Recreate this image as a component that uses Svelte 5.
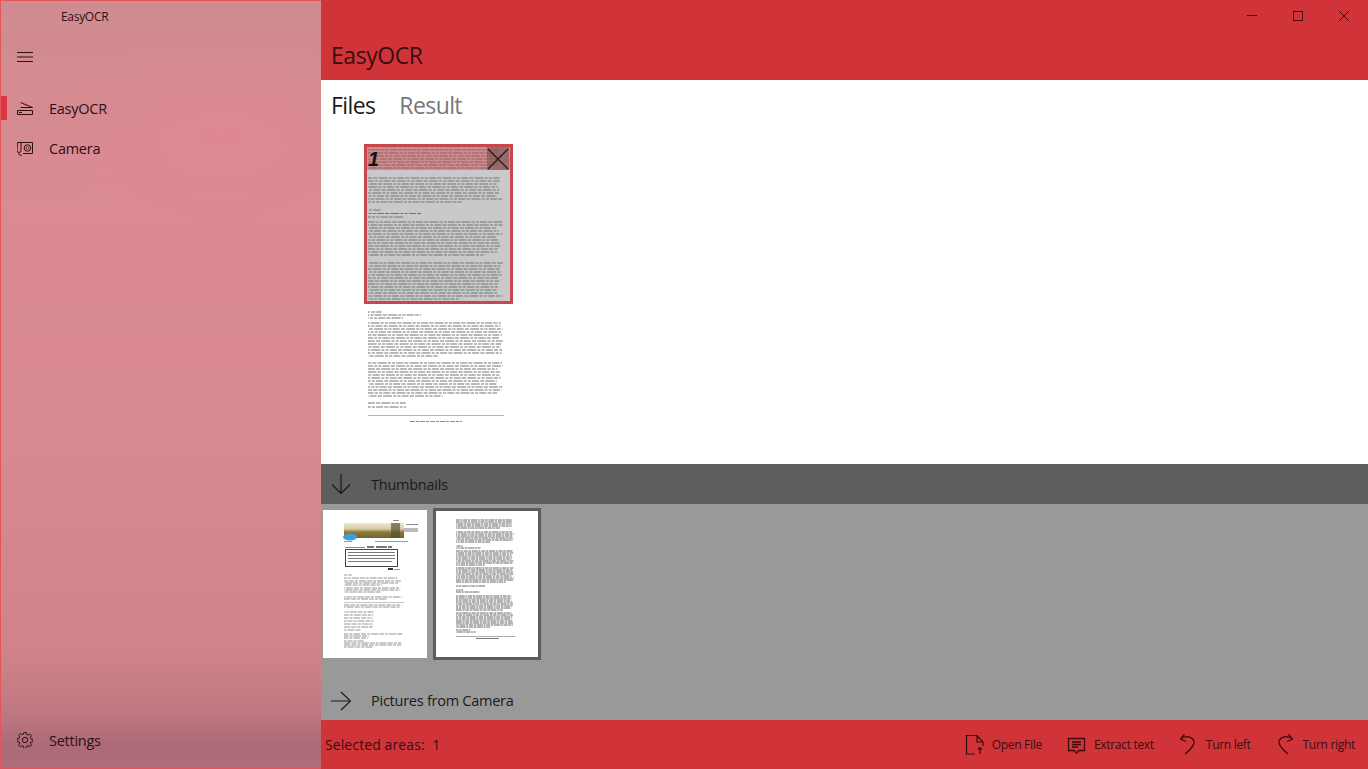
<script>
	// pseudo random line lengths, so the greeked pages don't look too regular
	function lineWidths(seed, count, max) {
		const out = []
		let s = seed
		for (let i = 0; i < count; i++) {
			s = (s * 9301 + 49297) % 233280
			const w = i === count - 1 && count > 2 ? max * (0.4 + (s / 233280) * 0.5) : max * (0.95 + (s / 233280) * 0.05)
			out.push(w)
		}
		return out
	}

	function block(seed, y, count, x, max, step) {
		return lineWidths(seed, count, max).map((w, i) => ({
			x,
			y: y + i * step,
			w,
			// shift the word gaps per line so they don't stack up in columns
			o: ((seed + i) * 13.7) % 31,
		}))
	}

	const mainBlocks = [
		...block(3, 6, 7, 4, 135, 3),
		...block(7, 34, 9, 4, 135, 3),
		...block(11, 66, 1, 4, 14, 3),
		...block(13, 69.500, 1, 4, 55, 3),
		...block(15, 73, 1, 4, 36, 3),
		...block(17, 78, 12, 4, 135, 3),
		...block(19, 119, 13, 4, 135, 3),
		...block(23, 168, 1, 4, 14, 3),
		...block(29, 171, 1, 4, 55, 3),
		...block(31, 174, 1, 4, 36, 3),
		...block(37, 179, 12, 4, 135, 3),
		...block(41, 219, 12, 4, 135, 3),
		...block(43, 259, 1, 4, 38, 3),
		...block(47, 263, 1, 4, 40, 3),
	]

	const sideBlocks = [
		...block(2, 9, 5, 20, 58, 2),
		...block(5, 21, 6, 20, 58, 2),
		...block(8, 35, 1, 20, 7, 2),
		...block(9, 37, 1, 20, 25, 2),
		...block(12, 40, 8, 20, 58, 2),
		...block(14, 57, 8, 20, 58, 2),
		...block(16, 75, 1, 20, 30, 2),
		...block(18, 79, 1, 20, 7, 2),
		...block(21, 81, 1, 20, 25, 2),
		...block(22, 85, 8, 20, 58, 2),
		...block(25, 102, 8, 20, 58, 2),
		...block(24, 119, 1, 20, 15, 2),
		...block(39, 121, 1, 20, 20, 2),
	]

	const firstThumb = [
		...block(4, 65, 1, 21, 8, 2),
		...block(6, 68, 1, 21, 55, 2),
		...block(10, 71, 3, 21, 58, 2),
		...block(20, 78, 3, 21, 58, 2),
		...block(26, 87, 1, 21, 60, 2),
		...block(27, 89, 1, 21, 45, 2),
		...block(28, 95, 2, 21, 58, 2),
		...block(32, 102, 7, 21, 30, 3),
		...block(34, 124, 1, 21, 60, 2),
		...block(33, 126, 2, 21, 25, 2),
		...block(35, 131, 1, 21, 20, 2),
		...block(36, 133, 3, 21, 58, 2),
	]
</script>

<main class="window">
	<aside class="sidebar">
		<div class="app-title">EasyOCR</div>
		<div class="menu-button">
			<svg width="16" height="16" viewBox="0 0 16 16" class="nav-icon">
				<path d="M0 4.500h16M0 9h16M0 13.500h16" fill="none" stroke="#2e1014" stroke-width="1" />
			</svg>
		</div>
		<nav>
			<div class="nav-item selected">
				<svg width="16" height="16" viewBox="0 0 16 16" class="nav-icon">
					<path d="M3.500 2.500L15.500 7.500H3.500M.5 10.500h15v4h-15zM2 12.500h3" fill="none" stroke="#2e1014" stroke-width="1" />
				</svg>
				<span>EasyOCR</span>
			</div>
			<div class="nav-item">
				<svg width="16" height="16" viewBox="0 0 16 16" class="nav-icon">
					<path d="M4 2.500H15.500V13.500H6M.5 2.500h3.500v8a2 2 0 0 1-4 0zM2 12.500v1.500c0 .8.6 1.200 1.500 1.200h1.500" fill="none" stroke="#2e1014" stroke-width="1" />
					<circle cx="10.500" cy="8" r="3.300" fill="none" stroke="#2e1014" />
					<circle cx="10.500" cy="8" r="1.500" fill="none" stroke="#2e1014" stroke-width=".6" />
				</svg>
				<span>Camera</span>
			</div>
		</nav>
		<div class="nav-item settings">
			<svg width="16" height="16" viewBox="0 0 16 16" class="nav-icon">
				<circle cx="8" cy="8" r="2.700" fill="none" stroke="#2e1014" />
				<path d="M6.800.5h2.400l.4 2 1.300.6 1.800-1.100 1.700 1.700-1.100 1.800.6 1.300 2 .4v2.400l-2 .4-.6 1.300 1.100 1.800-1.700 1.700-1.800-1.100-1.300.6-.4 2H6.800l-.4-2-1.300-.6-1.800 1.100-1.700-1.700 1.100-1.800-.6-1.300-2-.4V6.800l2-.4.6-1.300L1.600 3.300l1.700-1.700 1.800 1.100 1.300-.6z" fill="none" stroke="#2e1014" stroke-width="1" />
			</svg>
			<span>Settings</span>
		</div>
	</aside>

	<section class="content">
		<header class="topbar">
			<div class="window-buttons">
				<svg width="12" height="12" viewBox="0 0 12 12"><path d="M1 5.500h10" stroke="#3f0b0e" fill="none" /></svg>
				<svg width="12" height="12" viewBox="0 0 12 12"><rect x="1.500" y="1.500" width="9" height="9" stroke="#3f0b0e" fill="none" /></svg>
				<svg width="12" height="12" viewBox="0 0 12 12"><path d="M1 1l10 10M11 1L1 11" stroke="#3f0b0e" fill="none" /></svg>
			</div>
			<h1>EasyOCR</h1>
		</header>

		<div class="tabs">
			<span class="tab active">Files</span>
			<span class="tab">Result</span>
		</div>

		<div class="viewer">
			<div class="page">
				<svg width="149" height="285" viewBox="0 0 149 285" class="greeked">
					{#each mainBlocks as l}
						<line x1={l.x} y1={l.y} x2={l.x + l.w} y2={l.y} stroke="#3c3e42" stroke-width="1.100" stroke-dasharray="7 1.200 4 1.200 9 1.200 3 1.200 3 1.200" stroke-dashoffset={l.o} opacity=".72" />
					{/each}
					<rect x="4" y="271" width="136" height="1" fill="#b5b5b5" />
					<line x1="46" y1="277.500" x2="98" y2="277.500" stroke="#8a8a8a" stroke-dasharray="5 1 3 1" />
				</svg>
				<div class="selection">
					<div class="selection-head">
						<span class="selection-number">1</span>
						<div class="selection-close">
							<svg width="22" height="22" viewBox="0 0 22 22"><path d="M1 1l20 20M21 1L1 21" stroke="#1c1c1c" fill="none" stroke-width="1.200" /></svg>
						</div>
					</div>
				</div>
			</div>
		</div>

		<div class="expander dark">
			<svg width="20" height="20" viewBox="0 0 20 20" class="arrow">
				<path d="M10 0v19M1 10.500L10 19.500 19 10.500" fill="none" stroke="#1a1a1a" stroke-width="1.200" />
			</svg>
			<span>Thumbnails</span>
		</div>

		<div class="thumbs">
			<div class="thumb first">
				<svg width="104" height="148" viewBox="0 0 104 148" class="greeked">
					<defs>
						<linearGradient id="banner" x1="0" y1="0" x2="0" y2="1">
							<stop offset="0" stop-color="#efe8d0" />
							<stop offset=".4" stop-color="#d8cba0" />
							<stop offset=".6" stop-color="#8d7c3c" />
							<stop offset="1" stop-color="#6f6330" />
						</linearGradient>
					</defs>
					<rect x="21" y="13" width="60" height="15" fill="url(#banner)" />
					<rect x="68" y="13" width="9" height="15" fill="#4f4f2a" opacity=".65" />
					<ellipse cx="27" cy="27" rx="7" ry="3.500" fill="#3f9fd8" />
					<rect x="70" y="10" width="6" height="1" fill="#888" />
					<rect x="83" y="14" width="12" height="1" fill="#888" />
					<rect x="81" y="18" width="14" height="4" fill="#bbb" />
					<rect x="21" y="31" width="8" height="1" fill="#999" />
					<rect x="52" y="31" width="33" height="1" fill="#999" />
					<rect x="22" y="37" width="20" height="1" fill="#888" />
					<rect x="44" y="36" width="7" height="2" fill="#777" />
					<rect x="53" y="36" width="11" height="2" fill="#777" />
					<rect x="65" y="36" width="4" height="2" fill="#777" />
					<rect x="22.500" y="39.500" width="52" height="17" fill="#fff" stroke="#444" stroke-width="1" />
					<rect x="25" y="42" width="47" height="1" fill="#777" />
					<rect x="25" y="45" width="47" height="1" fill="#777" />
					<rect x="25" y="48" width="47" height="1" fill="#777" />
					<rect x="25" y="51" width="44" height="1" fill="#777" />
					<rect x="65" y="58" width="5" height="2" fill="#333" />
					<rect x="71" y="59" width="6" height="1" fill="#999" />
					{#each firstThumb as l}
						<line x1={l.x} y1={l.y} x2={l.x + l.w} y2={l.y} stroke="#77797d" stroke-width=".8" stroke-dasharray="5 1 3 1 7 1" stroke-dashoffset={l.o} />
					{/each}
					<rect x="21" y="92" width="60" height="1" fill="#c5c5c5" />
				</svg>
			</div>
			<div class="thumb second">
				<svg width="102" height="146" viewBox="0 0 102 146" class="greeked">
					{#each sideBlocks as l}
						<line x1={l.x} y1={l.y} x2={l.x + l.w} y2={l.y} stroke="#55575b" stroke-width=".9" stroke-dasharray="4 .7 2.500 .7 6 .7 2 .7" stroke-dashoffset={l.o} />
					{/each}
					<rect x="20" y="125" width="59" height="1" fill="#aaa" />
					<rect x="40" y="127" width="23" height="1" fill="#777" />
				</svg>
			</div>
		</div>

		<div class="expander">
			<svg width="20" height="20" viewBox="0 0 20 20" class="arrow">
				<path d="M0 10h19M10 1l9.500 9L10 19" fill="none" stroke="#1a1a1a" stroke-width="1.200" />
			</svg>
			<span>Pictures from Camera</span>
		</div>

		<footer class="commandbar">
			<div class="status">Selected areas:&nbsp;&nbsp;1</div>
			<div class="commands">
				<button>
					<svg width="20" height="21" viewBox="0 0 20 21">
						<path d="M10 20H1.500V1.500H12L18 8V12M12 1.500V8H18M15 20V13.500M13 15.500l2-2 2 2" fill="none" stroke="#3a0a0e" stroke-width="1.200" />
					</svg>
					Open File
				</button>
				<button>
					<svg width="20" height="20" viewBox="0 0 20 20">
						<path d="M1.500 3.500h16v12h-5.500l-2.500 2.500-2.500-2.500h-5.500zM5 7h9M5 9.500h9M5 12h6" fill="none" stroke="#3a0a0e" stroke-width="1.300" />
					</svg>
					Extract text
				</button>
				<button>
					<svg width="20" height="21" viewBox="0 0 20 21">
						<path d="M5.500.5L1.500 5 7 7.500M1.500 5C4.500 2 11 1.500 14.500 6 17 10 12 15 6 20" fill="none" stroke="#3a0a0e" stroke-width="1.300" />
					</svg>
					Turn left
				</button>
				<button>
					<svg width="20" height="21" viewBox="0 0 20 21">
						<g transform="translate(18 0) scale(-1 1)">
							<path d="M5.500.5L1.500 5 7 7.500M1.500 5C4.500 2 11 1.500 14.500 6 17 10 12 15 6 20" fill="none" stroke="#3a0a0e" stroke-width="1.300" />
						</g>
					</svg>
					Turn right
				</button>
			</div>
		</footer>
	</section>
</main>

<style>
	:global(body) {
		margin: 0;
		font-family: "Open Sans", "Noto Sans", sans-serif;
	}
	.window {
		display: flex;
		width: 1368px;
		height: 769px;
		overflow: hidden;
	}
	.sidebar {
		box-sizing: border-box;
		width: 321px;
		height: 769px;
		display: flex;
		flex-direction: column;
		border: solid 1px #e0565c;
		border-right: 0;
		color: #2e1014;
		background:
			radial-gradient(ellipse 200px 90px at 220px 130px, rgba(230, 135, 145, 0.5), transparent),
			linear-gradient(180deg, #cf8c90 0%, #dc8a92 30%, #d98a90 55%, #d18389 84%, #c27a82 92%, #ac6a78 97%, #b06d7b 100%);
	}
	.app-title {
		height: 31px;
		padding-left: 60px;
		font-size: 12px;
		line-height: 32px;
		letter-spacing: -0.3px;
	}
	.menu-button {
		height: 48px;
		display: flex;
		align-items: center;
		padding-left: 16px;
	}
	nav {
		margin-top: 8px;
	}
	.nav-item {
		height: 40px;
		display: flex;
		align-items: center;
		padding-left: 16px;
		font-size: 14.500px;
		letter-spacing: -0.25px;
		position: relative;
	}
	.nav-icon {
		margin-right: 16px;
		flex: none;
	}
	.selected::before {
		content: "";
		position: absolute;
		left: 0;
		top: 8px;
		width: 6px;
		height: 24px;
		background-color: #dc3640;
	}
	.settings {
		margin-top: auto;
		margin-bottom: 8px;
	}
	.content {
		flex: 1 1 auto;
		min-width: 0;
		display: flex;
		flex-direction: column;
		background-color: white;
	}
	.topbar {
		height: 80px;
		flex: none;
		background-color: #d13438;
		color: #3a0d10;
	}
	.window-buttons {
		height: 32px;
		display: flex;
		justify-content: flex-end;
		align-items: center;
		gap: 34px;
		padding-right: 18px;
	}
	h1 {
		margin: 0;
		padding-left: 10px;
		font-size: 23px;
		font-weight: 400;
		line-height: 46px;
		letter-spacing: -0.45px;
	}
	.tabs {
		height: 50px;
		flex: none;
		display: flex;
		gap: 24px;
		padding-left: 10px;
		align-items: center;
		box-sizing: border-box;
	}
	.tab {
		font-size: 23px;
		color: #777;
		letter-spacing: -0.6px;
	}
	.tab.active {
		color: #1a1a1a;
	}
	.viewer {
		flex: 1 1 auto;
		min-height: 0;
		padding: 14px 0 0 43px;
		overflow: hidden;
	}
	.page {
		width: 149px;
		height: 285px;
		position: relative;
	}
	.page svg {
		display: block;
	}
	.greeked {
		filter: blur(0.35px);
	}
	.selection {
		position: absolute;
		left: 0;
		top: 0;
		width: 149px;
		height: 160px;
		box-sizing: border-box;
		border: solid 3px #c8474c;
		background-color: rgba(120, 120, 125, 0.4);
	}
	.selection-head {
		height: 23px;
		display: flex;
		justify-content: space-between;
		background-color: rgba(209, 52, 56, 0.4);
	}
	.selection-number {
		font-family: "Liberation Sans", sans-serif;
		font-size: 20px;
		line-height: 24px;
		font-weight: 700;
		font-style: italic;
		color: #111;
		padding-left: 1px;
	}
	.selection-close {
		width: 22px;
		height: 23px;
		margin-right: 1px;
		display: flex;
		align-items: center;
		justify-content: center;
		background-color: rgba(110, 70, 70, 0.5);
	}
	.expander {
		height: 39px;
		flex: none;
		display: flex;
		align-items: center;
		background-color: #999;
		color: #1a1a1a;
		font-size: 14.500px;
		letter-spacing: -0.25px;
	}
	.expander.dark {
		height: 40px;
		background-color: #5e5e5e;
	}
	.arrow {
		margin: 0 20px 0 10px;
	}
	.thumbs {
		height: 177px;
		flex: none;
		box-sizing: border-box;
		background-color: #999;
		display: flex;
		align-items: flex-start;
		gap: 6px;
		padding: 4px 0 0 2px;
	}
	.thumb {
		background-color: white;
	}
	.thumb svg {
		display: block;
	}
	.first {
		margin-top: 2px;
	}
	.second {
		border: solid 3px #5c5c5c;
	}
	.commandbar {
		height: 49px;
		flex: none;
		display: flex;
		align-items: center;
		justify-content: space-between;
		background-color: #d13438;
		color: #3a0d10;
		padding-left: 4px;
		box-sizing: border-box;
	}
	.status {
		font-size: 14px;
		letter-spacing: 0.1px;
	}
	.commands {
		display: flex;
		gap: 25px;
		padding-right: 13px;
	}
	button {
		display: flex;
		align-items: center;
		gap: 7px;
		padding: 0;
		border: 0;
		background: none;
		color: #3a0d10;
		font-family: inherit;
		font-size: 12px;
		letter-spacing: -0.3px;
	}
</style>
